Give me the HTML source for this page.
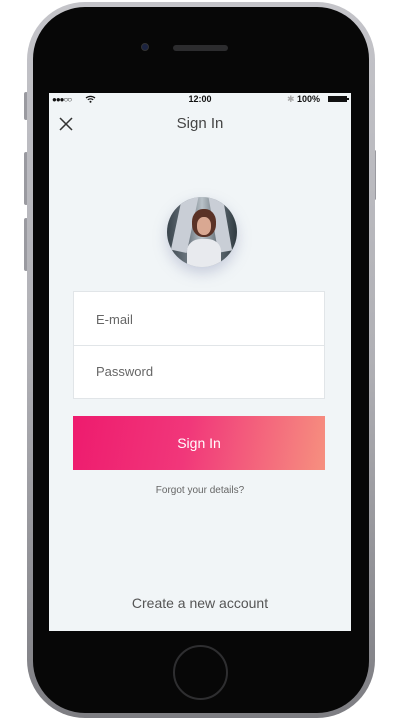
<!DOCTYPE html>
<html><head><meta charset="utf-8"><style>
*{margin:0;padding:0;box-sizing:border-box}
body{width:406px;height:718px;background:#fff;position:relative;overflow:hidden;font-family:"Liberation Sans",sans-serif}
.frame{position:absolute;left:27px;top:2px;width:348px;height:716px;border-radius:58px;background:linear-gradient(180deg,#c4c4c9 0%,#b0b0b5 50%,#7d7d82 100%)}
.black{position:absolute;left:33px;top:7px;width:336px;height:706px;border-radius:52px;background:#070707}
.btn{position:absolute;left:24px;width:4px;background:#9a9aa0;border-radius:2px}
.screen{position:absolute;left:49px;top:93px;width:302px;height:538px;background:#f1f5f7}
.abs{position:absolute}
</style></head><body>
<div class="btn" style="top:92px;height:28px"></div>
<div class="btn" style="top:152px;height:53px"></div>
<div class="btn" style="top:218px;height:53px"></div>
<div class="btn" style="left:373px;top:150px;height:50px;width:3px"></div>
<div class="frame"></div>
<div class="black"></div>
<div class="abs" style="left:141px;top:43px;width:8px;height:8px;border-radius:50%;background:#1b2340;border:1px solid #333"></div>
<div class="abs" style="left:173px;top:45px;width:55px;height:6px;border-radius:3px;background:#2c2c2e"></div>
<div class="abs" style="left:173px;top:645px;width:55px;height:55px;border-radius:50%;border:2px solid #2e2e30"></div>
<div class="screen">
  <div class="abs" style="left:3px;top:2px;font-size:8px;color:#111;letter-spacing:-1px">●●●○○</div>
  <svg class="abs" style="left:36px;top:2px" width="11" height="8" viewBox="0 0 11 8"><path d="M1 3a7 7 0 0 1 9 0M2.8 4.8a4.5 4.5 0 0 1 5.4 0" stroke="#111" stroke-width="1.2" fill="none"/><circle cx="5.5" cy="6.8" r="1" fill="#111"/></svg>
  <div class="abs" style="left:0;width:302px;text-align:center;top:1px;font-size:9px;font-weight:bold;color:#111">12:00</div>
  <div class="abs" style="left:238px;top:1px;font-size:9px;color:#aaa">✱</div>
  <div class="abs" style="left:248px;top:1px;font-size:9px;font-weight:bold;color:#111">100%</div>
  <div class="abs" style="left:279px;top:3px;width:19px;height:6px;background:#111"></div>
  <div class="abs" style="left:298px;top:5px;width:1.5px;height:2px;background:#111"></div>
  <svg class="abs" style="left:10px;top:24px" width="14" height="14" viewBox="0 0 14 14"><path d="M1 1L13 13M13 1L1 13" stroke="#333" stroke-width="1.5"/></svg>
  <div class="abs" style="left:0;width:302px;text-align:center;top:22px;font-size:15px;color:#444">Sign In</div>
  <div class="abs" style="left:118px;top:104px;width:70px;height:70px;border-radius:50%;overflow:hidden;background:linear-gradient(90deg,#39444c 0%,#6d7780 30%,#b9c2c8 50%,#5d6870 75%,#2f3a40 100%);box-shadow:0 6px 14px rgba(120,130,170,.35)">
    <div class="abs" style="left:10px;top:-5px;width:16px;height:60px;background:#c9ced6;transform:rotate(12deg)"></div>
    <div class="abs" style="left:46px;top:-5px;width:14px;height:60px;background:#c9ced6;transform:rotate(-10deg)"></div>
    <div class="abs" style="left:25px;top:12px;width:24px;height:28px;border-radius:45%;background:#5a3226"></div>
    <div class="abs" style="left:30px;top:20px;width:14px;height:18px;border-radius:45%;background:#d9a892"></div>
    <div class="abs" style="left:20px;top:42px;width:34px;height:30px;border-radius:40% 40% 0 0;background:#e8eaee"></div>
  </div>
  <div class="abs" style="left:24px;top:198px;width:252px;height:108px;background:#fff;border:1px solid #e1e5e8"></div>
  <div class="abs" style="left:25px;top:252px;width:250px;height:1px;background:#e1e5e8"></div>
  <div class="abs" style="left:47px;top:219px;font-size:13px;color:#666">E-mail</div>
  <div class="abs" style="left:47px;top:271px;font-size:13px;color:#666">Password</div>
  <div class="abs" style="left:24px;top:323px;width:252px;height:54px;background:linear-gradient(100deg,#ee1b6e 0%,#f1377a 45%,#f6907f 100%);color:#fff;text-align:center;line-height:54px;font-size:14px">Sign In</div>
  <div class="abs" style="left:0;width:302px;text-align:center;top:392px;font-size:10px;color:#666">Forgot your details?</div>
  <div class="abs" style="left:0;width:302px;text-align:center;top:502px;font-size:14px;color:#555">Create a new account</div>
</div>
</body></html>
